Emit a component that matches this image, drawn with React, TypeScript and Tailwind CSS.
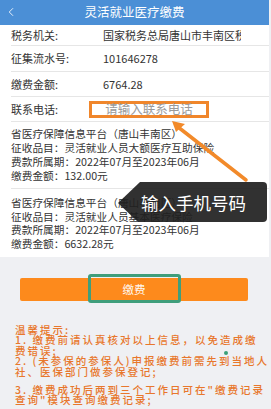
import { ChevronLeft } from "lucide-react";

const font = { fontFamily: '"Noto Sans CJK SC", "Noto Sans", sans-serif' };

function InfoRow({ label, value }: { label: string; value: string }) {
  return (
    <div className="flex items-center h-full">
      <div className="w-[92px] shrink-0">{label}</div>
      <div className="w-[138px] overflow-hidden whitespace-nowrap">{value}</div>
    </div>
  );
}

export default function App() {
  return (
    <div className="relative w-[271px] h-[409px] overflow-hidden bg-[#eff0f3] text-[#333]" style={font}>
      <div className="w-[269px]">
        {/* Header */}
        <div className="relative h-[25px] bg-[#4b8fd6] flex items-center justify-center text-white text-[12.5px]">
          <ChevronLeft size={14} strokeWidth={1.6} className="absolute left-[4px] top-[5px] text-white/90" />
          灵活就业医疗缴费
        </div>

        {/* Info */}
        <div className="bg-white text-[11px]">
          <div className="ml-[11px] h-[21px] border-b border-[#e6e6e6]">
            <InfoRow label="税务机关:" value="国家税务总局唐山市丰南区税务局" />
          </div>
          <div className="ml-[11px] h-[26px] border-b border-[#e6e6e6]">
            <InfoRow label="征集流水号:" value="101646278" />
          </div>
          <div className="ml-[11px] h-[25px] border-b border-[#e6e6e6]">
            <InfoRow label="缴费金额:" value="6764.28" />
          </div>
          <div className="ml-[11px] h-[25px] border-b border-[#e6e6e6] flex items-center">
            <div className="w-[78px] shrink-0">联系电话:</div>
            <div className="w-[120px] h-[17px] border-[3px] border-[#f0862b] flex items-center justify-center text-[12.5px] text-[#9a9a9a] leading-none">
              请输入联系电话
            </div>
          </div>
          <div className="ml-[11px] pt-[5px] pb-[5px] border-b border-[#e6e6e6] text-[10.7px] leading-[14px] whitespace-nowrap">
            <div>省医疗保障信息平台（唐山丰南区）</div>
            <div>征收品目：灵活就业人员大额医疗互助保险</div>
            <div>费款所属期：2022年07月至2023年06月</div>
            <div>缴费金额：132.00元</div>
          </div>
          <div className="ml-[11px] pt-[7px] pb-[7px] text-[10.7px] leading-[13.5px] whitespace-nowrap">
            <div>省医疗保障信息平台（唐山丰南区）</div>
            <div>征收品目：灵活就业人员基本医疗保险</div>
            <div>费款所属期：2022年07月至2023年06月</div>
            <div>缴费金额：6632.28元</div>
          </div>
        </div>

        {/* Pay button */}
        <div className="relative mt-[21px] ml-[20px] w-[228px] h-[23px] rounded-[2px] bg-[#fd8a1c] flex items-center justify-center text-white/95 text-[11.5px]">
          缴费
          <div className="absolute left-[68px] top-[-4px] w-[93px] h-[29px] border-[3px] border-[#3f9e7b] rounded-[3px]" />
        </div>

        {/* Tips */}
        <div className="mt-[24px] pl-[15px] text-[10.5px] font-medium tracking-[2px] leading-[10.4px] text-[#e8772c] whitespace-nowrap">
          <div>温馨提示:</div>
          <div>1. 缴费前请认真核对以上信息，以免造成缴</div>
          <div>费错误;</div>
          <div>2. (未参保的参保人)申报缴费前需先到当地人</div>
          <div>社、医保部门做参保登记;</div>
          <div className="h-[8px]" />
          <div>3. 缴费成功后两到三个工作日可在"缴费记录</div>
          <div>查询"模块查询缴费记录;</div>
        </div>
      </div>

      {/* green dot artifact */}
      <div className="absolute left-[224px] top-[351px] w-[4px] h-[4px] rounded-full bg-[#3aa07a]" />

      {/* Annotation arrow */}
      <svg className="absolute inset-0 pointer-events-none" width="271" height="409">
        <line x1="246" y1="180" x2="178" y2="127" stroke="#f28a2a" strokeWidth="3.5" strokeLinecap="round" />
        <polygon points="172,121 185,124 176,132" fill="#f28a2a" />
        <path
          d="M140,182 H263 Q267,182 267,186 V218 Q267,222 263,222 H138 L118,203 Z"
          fill="rgba(32,32,32,0.92)"
        />
      </svg>

      {/* Tooltip text */}
      <div className="absolute left-[141px] top-[192px] text-white text-[17.5px] leading-[22px] whitespace-nowrap">
        输入手机号码
      </div>
    </div>
  );
}
